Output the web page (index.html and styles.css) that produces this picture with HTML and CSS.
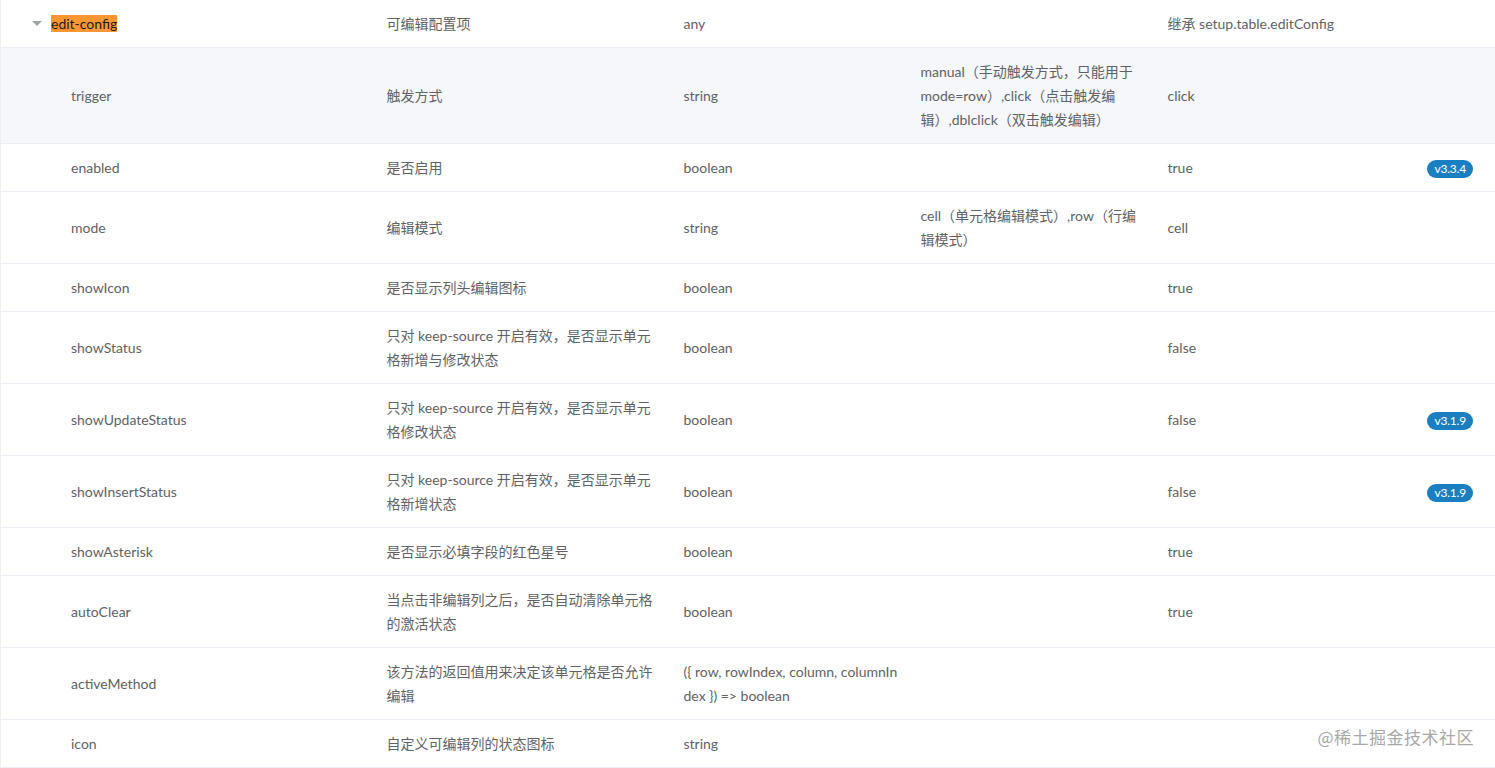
FILE: index.html
```html
<!DOCTYPE html>
<html lang="zh-CN">
<head>
<meta charset="utf-8">
<link rel="stylesheet" href="styles.css">
</head>
<body>
<table class="api">
  <colgroup>
    <col class="c1"><col class="c2"><col class="c3"><col class="c4"><col class="c5"><col class="c6">
  </colgroup>
  <tbody>
    <tr>
      <td class="name top"><span class="arrow"></span><mark class="hl">edit-config</mark></td>
      <td>可编辑配置项</td><td class="type">any</td><td></td><td>继承 setup.table.editConfig</td><td></td>
    </tr>
    <tr class="hover">
      <td class="name">trigger</td><td>触发方式</td><td class="type">string</td>
      <td>manual（手动触发方式，只能用于mode=row）,click（点击触发编辑）,dblclick（双击触发编辑）</td><td>click</td><td></td>
    </tr>
    <tr>
      <td class="name">enabled</td><td>是否启用</td><td class="type">boolean</td><td></td><td>true</td><td class="ver"><span class="badge">v3.3.4</span></td>
    </tr>
    <tr>
      <td class="name">mode</td><td>编辑模式</td><td class="type">string</td><td>cell（单元格编辑模式）,row（行编辑模式）</td><td>cell</td><td></td>
    </tr>
    <tr>
      <td class="name">showIcon</td><td>是否显示列头编辑图标</td><td class="type">boolean</td><td></td><td>true</td><td></td>
    </tr>
    <tr>
      <td class="name">showStatus</td><td>只对 keep-source 开启有效，是否显示单元格新增与修改状态</td><td class="type">boolean</td><td></td><td>false</td><td></td>
    </tr>
    <tr>
      <td class="name">showUpdateStatus</td><td>只对 keep-source 开启有效，是否显示单元格修改状态</td><td class="type">boolean</td><td></td><td>false</td><td class="ver"><span class="badge">v3.1.9</span></td>
    </tr>
    <tr>
      <td class="name">showInsertStatus</td><td>只对 keep-source 开启有效，是否显示单元格新增状态</td><td class="type">boolean</td><td></td><td>false</td><td class="ver"><span class="badge">v3.1.9</span></td>
    </tr>
    <tr>
      <td class="name">showAsterisk</td><td>是否显示必填字段的红色星号</td><td class="type">boolean</td><td></td><td>true</td><td></td>
    </tr>
    <tr>
      <td class="name">autoClear</td><td>当点击非编辑列之后，是否自动清除单元格的激活状态</td><td class="type">boolean</td><td></td><td>true</td><td></td>
    </tr>
    <tr>
      <td class="name">activeMethod</td><td>该方法的返回值用来决定该单元格是否允许编辑</td><td class="type">({ row, rowIndex, column, columnIndex }) =&gt; boolean</td><td></td><td></td><td></td>
    </tr>
    <tr>
      <td class="name">icon</td><td>自定义可编辑列的状态图标</td><td class="type">string</td><td></td><td></td><td></td>
    </tr>
  </tbody>
</table>
<div class="watermark">@稀土掘金技术社区</div>
</body>
</html>
```

FILE: styles.css
```css
html, body {
  margin: 0;
  padding: 0;
  background: #ffffff;
}
body {
  font-family: Lato, "Noto Sans CJK SC", sans-serif;
  font-size: 14px;
  color: #606266;
  overflow: hidden;
  height: 768px;
  position: relative;
}
.api {
  width: 1495px;
  border-collapse: collapse;
  table-layout: fixed;
  border-left: 1px solid #ebeef5;
}
.c1 { width: 376px; }
.c2 { width: 297px; }
.c3 { width: 237px; }
.c4 { width: 247px; }
.c5 { width: 242px; }
.c6 { width: auto; }
.api td {
  padding: 12px 14px 11px 10px;
  line-height: 24px;
  vertical-align: middle;
  border-bottom: 1px solid #ebeef5;
  word-break: break-all;
}
.api td.type { padding-right: 6px; }
.api tr:first-child td { height: 24px; }
.api td.name { padding-left: 70px; }
.api td.name.top { padding-left: 31px; }
.api tr.hover td { background: #f5f7fa; }
.arrow {
  display: inline-block;
  width: 0;
  height: 0;
  border-left: 5.5px solid transparent;
  border-right: 5.5px solid transparent;
  border-top: 5.5px solid #a0a3a8;
  margin-right: 9px;
  vertical-align: 3px;
}
.hl {
  background: #ff9632;
  color: #1a1a1a;
  padding: 0;
}
.ver {
  text-align: right;
  padding-right: 22px !important;
}
.badge {
  display: inline-block;
  background: #1a7fc1;
  color: #ffffff;
  font-size: 12px;
  line-height: 18px;
  height: 18px;
  padding: 0 7px;
  border-radius: 9px;
  letter-spacing: -0.2px;
  vertical-align: middle;
}
.watermark {
  position: absolute;
  right: 21px;
  top: 724px;
  font-size: 17px;
  color: #a8a8a8;
  letter-spacing: 0.5px;
  font-family: "Noto Sans CJK SC", sans-serif;
}
```
